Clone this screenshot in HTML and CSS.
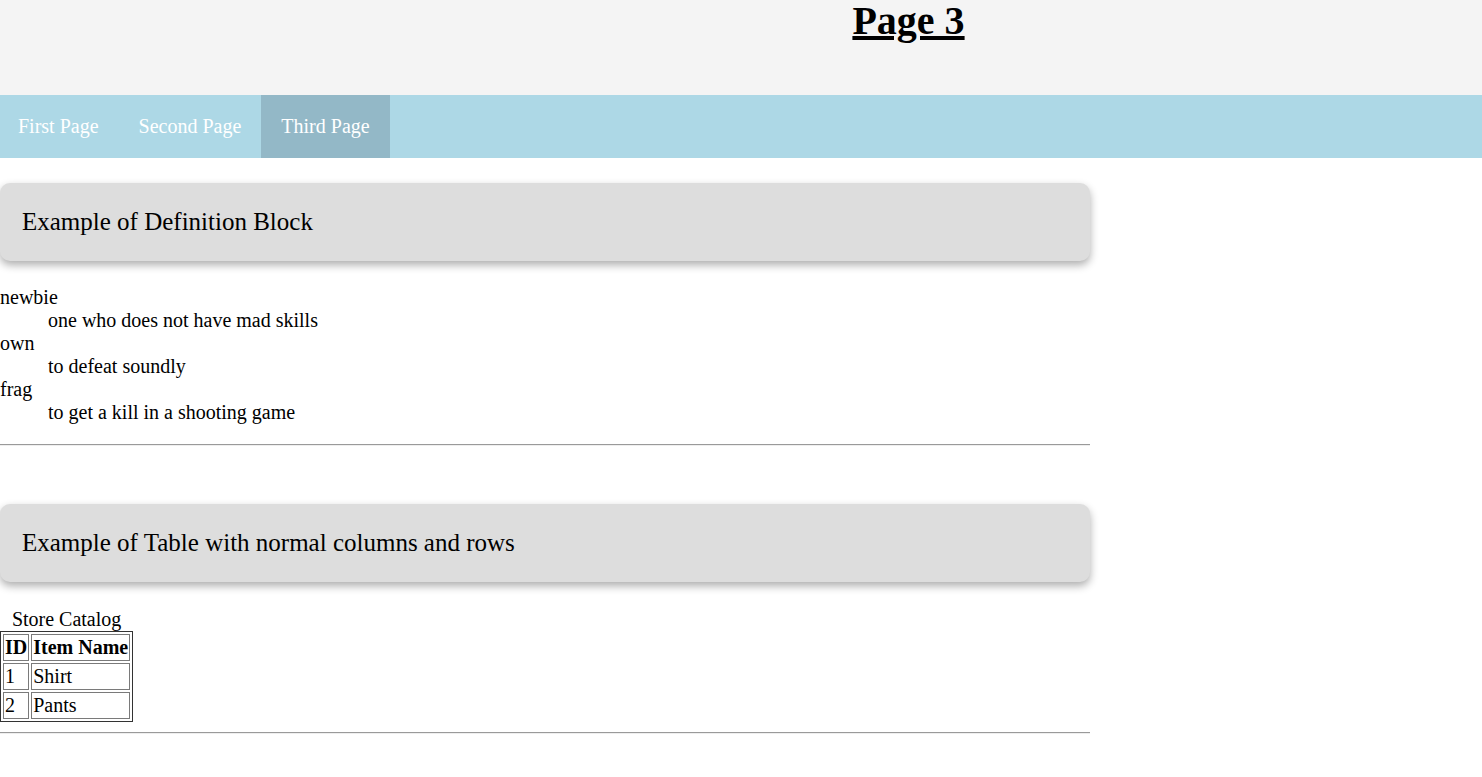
FILE: index.html
```html
<!DOCTYPE html>
<html>
<head>
<meta charset="utf-8">
<title>Page 3</title>
<link rel="stylesheet" href="styles.css">
</head>
<body>
<header class="site-header">
  <h1 class="page-title">Page 3</h1>
</header>
<nav class="site-nav">
  <a class="nav-link" href="#">First Page</a>
  <a class="nav-link" href="#">Second Page</a>
  <a class="nav-link active" href="#">Third Page</a>
</nav>
<main class="content">
  <section class="block">
    <div class="card">Example of Definition Block</div>
    <dl class="defs">
      <dt>newbie</dt>
      <dd>one who does not have mad skills</dd>
      <dt>own</dt>
      <dd>to defeat soundly</dd>
      <dt>frag</dt>
      <dd>to get a kill in a shooting game</dd>
    </dl>
    <hr class="rule">
  </section>
  <section class="block">
    <div class="card">Example of Table with normal columns and rows</div>
    <table class="catalog">
      <caption>Store Catalog</caption>
      <tr><th>ID</th><th>Item Name</th></tr>
      <tr><td>1</td><td>Shirt</td></tr>
      <tr><td>2</td><td>Pants</td></tr>
    </table>
    <hr class="rule">
  </section>
</main>
</body>
</html>
```
FILE: styles.css
```css
html, body {
  margin: 0;
  padding: 0;
}
body {
  font-family: "Liberation Serif", "Times New Roman", serif;
  font-size: 20px;
  color: #000;
  background: #fff;
}
.site-header {
  background: #f4f4f4;
  height: 95px;
  padding-left: 335px;
  text-align: center;
}
.page-title {
  margin: 0;
  font-size: 40px;
  line-height: 42px;
  font-weight: bold;
  text-decoration: underline;
}
.site-nav {
  display: flex;
  background: #add8e6;
}
.nav-link {
  display: block;
  padding: 20px 20px;
  color: #fff;
  text-decoration: none;
  font-size: 20px;
  line-height: 23px;
}
.nav-link:first-child {
  padding-left: 18px;
}
.nav-link.active {
  background: #93b8c7;
}
.content {
  width: 1090px;
}
.block {
  margin-bottom: 58px;
}
.card {
  margin: 25px 0;
  padding: 25px 22px;
  background: #ddd;
  border-radius: 10px;
  box-shadow: 0 4px 9px rgba(0, 0, 0, 0.32);
  font-size: 25px;
  line-height: 28px;
}
.defs {
  margin: 20px 0;
  line-height: 23px;
}
.defs dd {
  margin-left: 48px;
}
.rule {
  margin: 10px 0;
  border: 0;
  border-top: 1px solid #9a9a9a;
  border-bottom: 1px solid #eeeeee;
  height: 0;
}
.catalog {
  margin-top: 26px;
  border: 1px solid #333;
  border-spacing: 2px;
  font-size: 20px;
  line-height: 23px;
}
.catalog caption {
  text-align: center;
}
.catalog th,
.catalog td {
  border: 1px solid #7a7a7a;
  padding: 1px;
  text-align: left;
}
```
